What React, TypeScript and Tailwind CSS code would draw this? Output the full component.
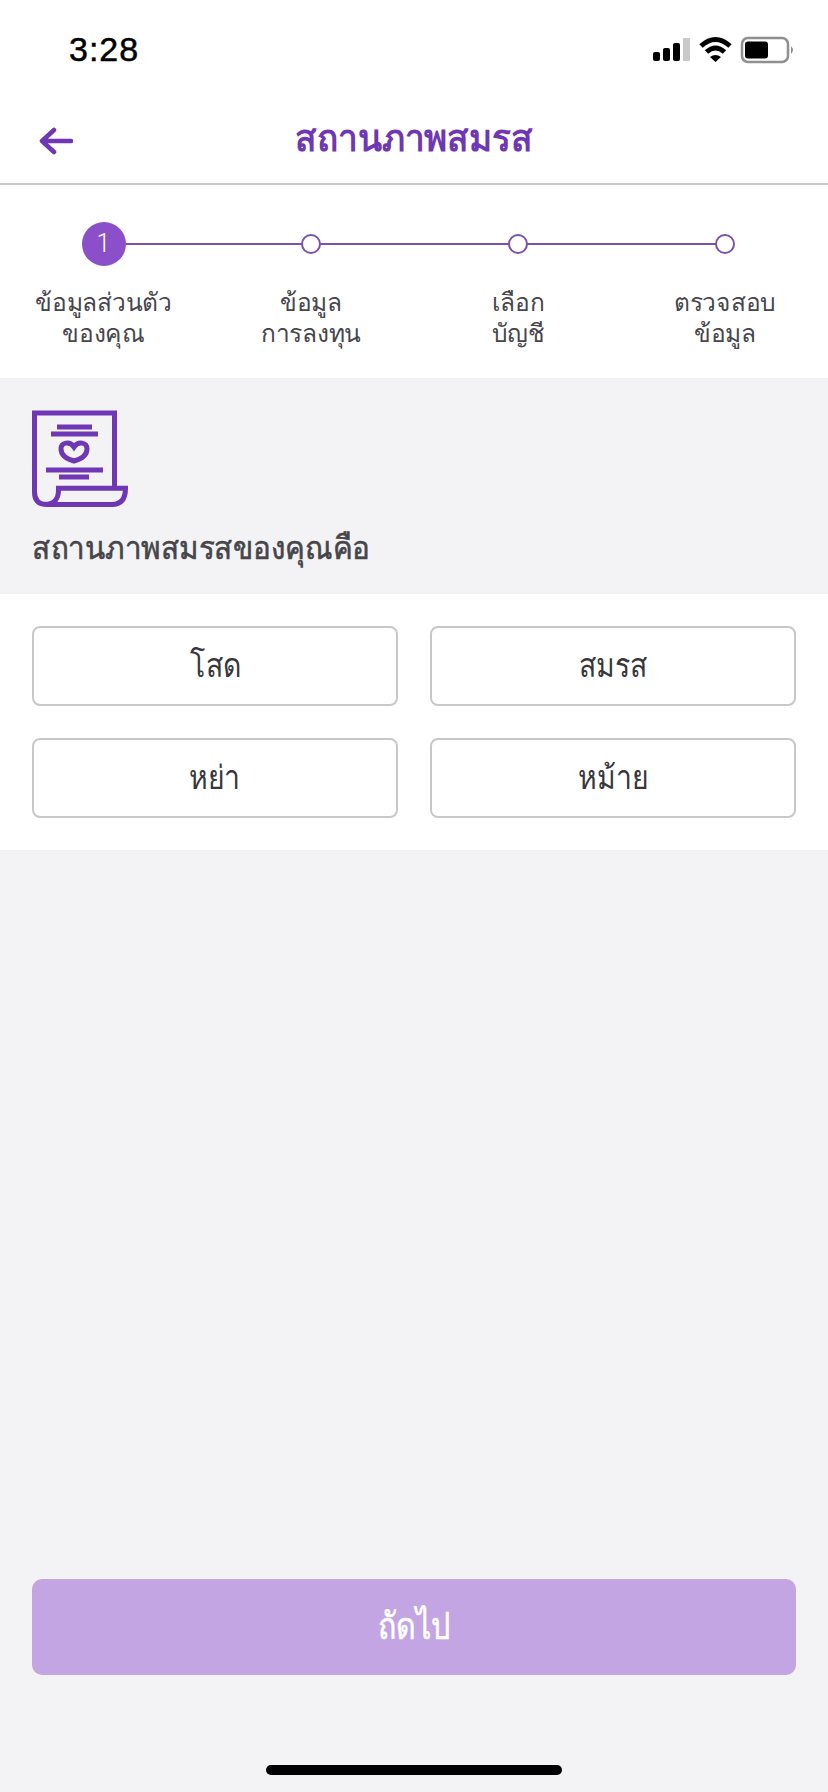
import React from 'react';

const steps = [
  ['ข้อมูลส่วนตัว', 'ของคุณ'],
  ['ข้อมูล', 'การลงทุน'],
  ['เลือก', 'บัญชี'],
  ['ตรวจสอบ', 'ข้อมูล'],
];

const options = ['โสด', 'สมรส', 'หย่า', 'หม้าย'];

const StatusBar = () => (
  <div className="h-[88px] flex items-start justify-between pt-[29px] pl-[69px] pr-[32px]">
    <span className="text-[34px] leading-[40px] font-medium text-black font-['Liberation_Sans',sans-serif] tracking-[1px] [-webkit-text-stroke:0.5px_#000]">3:28</span>
    <svg width="146" height="30" viewBox="0 0 146 30" className="mt-[6px]">
      <rect x="3" y="17" width="7" height="9" rx="2" fill="#000" />
      <rect x="13" y="13" width="7" height="13" rx="2" fill="#000" />
      <rect x="23" y="8" width="7" height="18" rx="2" fill="#000" />
      <rect x="33" y="3" width="7" height="23" fill="#c9c9c9" />
      <path d="M51 11 Q 65.500 -2 80 11" fill="none" stroke="#000" strokeWidth="5" />
      <path d="M56.500 17 Q 65.500 9 74.500 17" fill="none" stroke="#000" strokeWidth="5" />
      <path d="M60 22 Q 65.500 18 71 22 L65.500 27 Z" fill="#000" />
      <rect x="92" y="3" width="46" height="24" rx="6" fill="none" stroke="#8f8f8f" strokeWidth="2.500" />
      <rect x="95" y="6.500" width="23" height="17" rx="3" fill="#000" />
      <path d="M141 11 Q 145 15 141 19 Z" fill="#8f8f8f" />
    </svg>
  </div>
);

const BackArrow = () => (
  <svg width="34" height="28" viewBox="0 0 34 28" fill="none" stroke="#6f37b4" strokeWidth="4.500" strokeLinecap="round" strokeLinejoin="round" className="absolute left-[39px] top-[39px]">
    <path d="M32 14 H3 M15 3 L3 14 L15 25" />
  </svg>
);

const ScrollIcon = () => (
  <svg width="96" height="98" viewBox="0 0 96 98" fill="none" stroke="#6f37b4" strokeWidth="5">
    <path d="M82.500 78 V3 H2.500 V82 Q2.500 94.500 15 94.500 H80 Q93.500 94.500 93.500 78.300 H26.500 Q27 94.500 13 94.500" />
    <path d="M25 17 H60 M19 24 H66 M14 60 H71 M27 67 H57" />
    <path d="M42 51 C 35 49 29 45 29 39 C 29 32 38 31 42 37 C 46 31 55 32 55 39 C 55 45 49 49 42 51 Z" />
  </svg>
);

const App = () => {
  return (
    <div className="w-[828px] h-[1792px] relative flex flex-col bg-[#f3f3f6] font-['Liberation_Sans','Noto_Sans',sans-serif] overflow-hidden">
      <div className="bg-white">
        <StatusBar />
        <div className="h-[97px] relative flex items-center justify-center border-b-2 border-[#c8c8c8]">
          <BackArrow />
          <h1 className="text-[37px] leading-[48px] font-bold text-[#6f37b4] mt-[6px] scale-x-[0.95]">สถานภาพสมรส</h1>
        </div>

        <div className="h-[193px] relative">
          <div className="absolute left-[103px] top-[58px] w-[622px] h-[2px] bg-[#7a52ae]" />
          <div className="grid grid-cols-4 pt-[37px] relative">
            {steps.map((s, i) => (
              <div key={i} className="flex flex-col items-center">
                <div className="h-[44px] flex items-center">
                  {i === 0 ? (
                    <div className="w-[44px] h-[44px] rounded-full bg-[#8a4fc9] text-white flex items-center justify-center text-[25px] font-light font-['Roboto',sans-serif]">1</div>
                  ) : (
                    <div className="w-[20px] h-[20px] rounded-full bg-white border-2 border-[#7a52ae]" />
                  )}
                </div>
                <div className="mt-[21px] text-[25px] leading-[31px] text-[#46464c] text-center scale-x-[0.98]">
                  <div>{s[0]}</div>
                  <div>{s[1]}</div>
                </div>
              </div>
            ))}
          </div>
        </div>
      </div>

      <div className="h-[216px] px-[32px] pt-[32px]">
        <ScrollIcon />
        <p className="mt-[18px] text-[32px] leading-[44px] text-[#45454b] origin-left scale-x-[0.925] [-webkit-text-stroke:0.6px_#45454b]">สถานภาพสมรสของคุณคือ</p>
      </div>

      <div className="bg-white px-[32px] py-[32px] grid grid-cols-2 gap-x-[32px] gap-y-[32px]">
        {options.map(o => (
          <button key={o} className="h-[80px] rounded-[8px] border-2 border-[#c8c8c8] bg-white text-[33px] text-[#37373c]">
            <span className="inline-block scale-x-[0.86]">{o}</span>
          </button>
        ))}
      </div>

      <div className="flex-1 flex flex-col justify-end px-[32px] pb-[117px]">
        <button className="h-[96px] rounded-[10px] bg-[#c2a5e2] text-white text-[37px]">
          <span className="inline-block scale-x-[0.82] [-webkit-text-stroke:0.6px_#fff]">ถัดไป</span>
        </button>
      </div>

      <div className="absolute left-[266px] bottom-[17px] w-[296px] h-[10px] rounded-full bg-black" />
    </div>
  );
};

export default App;
